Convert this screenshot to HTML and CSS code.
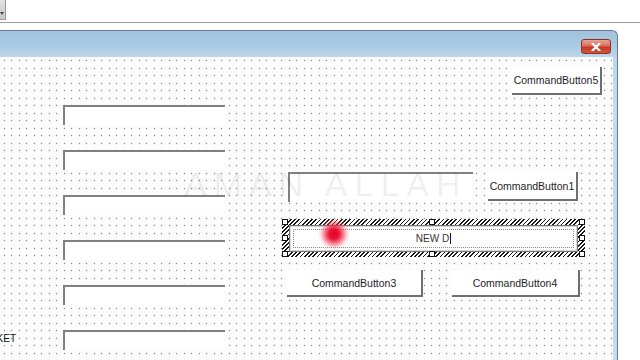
FILE: index.html
```html
<!DOCTYPE html>
<html>
<head>
<meta charset="utf-8">
<link rel="stylesheet" href="styles.css">
</head>
<body>
<div class="topbar"><div class="stub"><span class="stub-arrow"></span></div></div>
<div class="gap"></div>
<div class="window">
  <div class="titlebar">
    <div class="close"><svg width="10" height="8" viewBox="0 0 10 8"><path d="M1.5 0.5 L8.5 7.5 M8.5 0.5 L1.5 7.5" stroke="#fff" stroke-width="2.2" stroke-linecap="round"/></svg></div>
  </div>
  <div class="canvas">
    <div class="fields">
      <div class="row"><div class="lbl"></div><div class="tb"></div></div>
      <div class="row"><div class="lbl"></div><div class="tb"></div></div>
      <div class="row"><div class="lbl"></div><div class="tb"></div></div>
      <div class="row"><div class="lbl"></div><div class="tb"></div></div>
      <div class="row"><div class="lbl"></div><div class="tb"></div></div>
      <div class="row"><div class="lbl"><span>TICKET</span></div><div class="tb"></div></div>
    </div>
    <div class="ctl btn b5">CommandButton5</div>
    <div class="ctl tb wide"></div>
    <div class="ctl btn b1">CommandButton1</div>
    <div class="ctl sel">
      <div class="inner"><span class="caption">NEW D</span><span class="caret"></span></div>
      <span class="h tl"></span><span class="h tm"></span><span class="h tr"></span>
      <span class="h ml"></span><span class="h mr"></span>
      <span class="h bl"></span><span class="h bm"></span><span class="h br"></span>
    </div>
    <div class="ctl btn b3">CommandButton3</div>
    <div class="ctl btn b4">CommandButton4</div>
    <div class="dot"></div>
    <div class="watermark">AMAN ALLAH</div>
  </div>
</div>
</body>
</html>
```
FILE: styles.css
```css
html, body {
  margin: 0;
  padding: 0;
}
body {
  width: 640px;
  height: 360px;
  overflow: hidden;
  background: #ffffff;
  font-family: "Liberation Sans", Arial, sans-serif;
}
.topbar {
  height: 22px;
  border-bottom: 1px solid #9c9c9c;
  background: #ffffff;
}
.stub {
  width: 5px;
  height: 19px;
  background: linear-gradient(#e2e2e2, #c9c9c9);
  border-right: 1px solid #9a9a9a;
  border-bottom: 1px solid #9a9a9a;
  position: relative;
}
.stub-arrow {
  position: absolute;
  left: 0;
  top: 12px;
  width: 0;
  height: 0;
  border-left: 2px solid transparent;
  border-right: 2px solid transparent;
  border-top: 3px solid #444;
}
.gap {
  height: 7px;
}
.window {
  width: 618px;
  height: 330px;
  box-sizing: border-box;
  border-top: 1px solid #5e7c98;
  border-right: 1px solid #5e7c98;
  border-top-right-radius: 6px;
  background: linear-gradient(#a3c3dd 0px, #a9c8e1 14px, #bcd7eb 26px, #c3dcee 60px, #c3dcee 100%);
  padding-right: 4px;
  display: flex;
  flex-direction: column;
}
.titlebar {
  height: 26px;
  flex: none;
  display: flex;
  justify-content: flex-end;
  align-items: flex-start;
}
.close {
  margin-top: 8px;
  margin-right: 2px;
  width: 30px;
  height: 15px;
  box-sizing: border-box;
  border: 1px solid #8a3326;
  border-radius: 3px;
  background: linear-gradient(#e8a496 0%, #d9705e 45%, #c53a25 55%, #d2533d 100%);
  display: flex;
  align-items: center;
  justify-content: center;
}
.canvas {
  flex: 1;
  position: relative;
  background-color: #fcfcfc;
  background-image:
    radial-gradient(circle at 1.5px 1.5px, #8e8e8e 0 0.75px, transparent 1.05px),
    radial-gradient(circle at 1.5px 1.5px, #8e8e8e 0 0.75px, transparent 1.05px),
    radial-gradient(circle at 1.5px 1.5px, #8e8e8e 0 0.75px, transparent 1.05px),
    radial-gradient(circle at 1.5px 1.5px, #8e8e8e 0 0.75px, transparent 1.05px);
  background-size: 15px 15px;
  background-position: 3px 2px, 10px 2px, 3px 10px, 10px 10px;
  overflow: hidden;
}
.fields {
  padding-top: 48px;
  display: flex;
  flex-direction: column;
  gap: 25px;
}
.row {
  display: flex;
  height: 20px;
}
.lbl {
  width: 16px;
  margin-right: 47px;
  display: flex;
  justify-content: flex-end;
  padding-top: 3px;
  font-size: 10px;
  color: #111;
  white-space: nowrap;
}
.tb {
  width: 162px;
  height: 20px;
  box-sizing: border-box;
  background: #ffffff;
  border-top: 2px solid #808080;
  border-left: 2px solid #808080;
}
.ctl {
  position: absolute;
  box-sizing: border-box;
}
.btn {
  background: #ffffff;
  border-right: 2px solid #6f6f6f;
  border-bottom: 2px solid #6f6f6f;
  display: flex;
  align-items: center;
  justify-content: center;
  font-size: 10.5px;
  color: #1e1e1e;
}
.b5 { left: 512px; top: 10px; width: 90px; height: 28px; }
.b1 { left: 488px; top: 115px; width: 90px; height: 29px; }
.b3 { left: 287px; top: 213px; width: 136px; height: 27px; }
.b4 { left: 452px; top: 213px; width: 128px; height: 27px; }
.tb.wide { left: 288px; top: 115px; width: 185px; height: 30px; }
.sel {
  left: 282px;
  top: 162px;
  width: 303px;
  height: 38px;
  padding: 6px 7px 5px 7px;
  background: repeating-linear-gradient(135deg, #1a1a1a 0 1.2px, #ffffff 1.2px 3px);
}
.inner {
  position: relative;
  height: 100%;
  box-sizing: border-box;
  background: #ffffff;
  border: 1px solid #767676;
  box-shadow: inset 0 0 0 1px #d6d6d6, inset 0 0 0 2px #ffffff;
  display: flex;
  align-items: center;
  justify-content: center;
  font-size: 10px;
  color: #333;
}
.inner::before {
  content: "";
  position: absolute;
  left: 3px;
  top: 3px;
  right: 3px;
  bottom: 3px;
  border: 1px dotted #8a8a8a;
}
.caret {
  display: inline-block;
  width: 1px;
  height: 11px;
  margin-left: 1px;
  background: #111;
}
.h {
  position: absolute;
  width: 6px;
  height: 6px;
  box-sizing: border-box;
  background: #ffffff;
  border: 1px solid #111;
}
.tl { left: 0; top: 0; }
.tm { left: 147px; top: 0; }
.tr { right: 0; top: 0; }
.ml { left: 0; top: 16px; }
.mr { right: 0; top: 16px; }
.bl { left: 0; bottom: 0; }
.bm { left: 147px; bottom: 0; }
.br { right: 0; bottom: 0; }
.dot {
  position: absolute;
  left: 318px;
  top: 161px;
  width: 32px;
  height: 32px;
  border-radius: 50%;
  background: radial-gradient(circle, rgba(230,0,34,1) 0, rgba(234,8,44,0.95) 5px, rgba(240,40,70,0.65) 9px, rgba(246,100,120,0.25) 13px, rgba(255,255,255,0) 16px);
}
.watermark {
  position: absolute;
  left: 184px;
  top: 110px;
  font-size: 34px;
  line-height: 34px;
  letter-spacing: 7px;
  color: rgba(0, 0, 0, 0.07);
  white-space: nowrap;
  pointer-events: none;
}
```
